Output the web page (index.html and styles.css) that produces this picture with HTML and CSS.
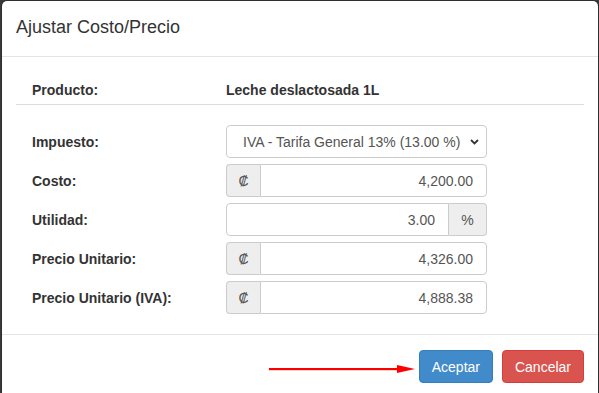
FILE: index.html
```html
<!DOCTYPE html>
<html lang="es">
<head>
  <meta charset="UTF-8">
  <title>Ajustar Costo/Precio</title>
  <link rel="stylesheet" href="styles.css">
</head>
<body>
  <div class="modal">
    <div class="modal-header">
      <h4 class="modal-title">Ajustar Costo/Precio</h4>
    </div>

    <div class="modal-body">
      <div class="row row-product">
        <div class="label">Producto:</div>
        <div class="label">Leche deslactosada 1L</div>
      </div>

      <div class="form">
        <div class="row">
          <div class="label">Impuesto:</div>
          <div class="select">
            <span class="select-text">IVA - Tarifa General 13% (13.00 %)</span>
            <svg class="chevron" width="9" height="6" viewBox="0 0 9 6">
              <path d="M1 1 L4.5 4.5 L8 1" fill="none" stroke="#333" stroke-width="1.8"/>
            </svg>
          </div>
        </div>

        <div class="row">
          <div class="label">Costo:</div>
          <div class="input-group">
            <span class="addon addon-left">₡</span>
            <span class="input">4,200.00</span>
          </div>
        </div>

        <div class="row">
          <div class="label">Utilidad:</div>
          <div class="input-group">
            <span class="input input-first">3.00</span>
            <span class="addon addon-right">%</span>
          </div>
        </div>

        <div class="row">
          <div class="label">Precio Unitario:</div>
          <div class="input-group">
            <span class="addon addon-left">₡</span>
            <span class="input">4,326.00</span>
          </div>
        </div>

        <div class="row">
          <div class="label">Precio Unitario (IVA):</div>
          <div class="input-group">
            <span class="addon addon-left">₡</span>
            <span class="input">4,888.38</span>
          </div>
        </div>
      </div>
    </div>

    <div class="modal-footer">
      <svg class="arrow" width="146" height="10" viewBox="0 0 146 10">
        <rect x="0" y="4" width="132" height="2.2" fill="#f00"/>
        <polygon points="128,1 146,5 128,9" fill="#f00"/>
      </svg>
      <button class="btn btn-primary">Aceptar</button>
      <button class="btn btn-danger">Cancelar</button>
    </div>
  </div>
</body>
</html>
```

FILE: styles.css
```css
body {
  margin: 0;
  background-color: #3a3a3a;
  font-family: "Liberation Sans", Arial, sans-serif;
  font-size: 14px;
  line-height: 20px;
  color: #333;
  overflow: hidden;
}
.modal {
  margin-left: 1px;
  width: 598px;
  height: 393px;
  box-sizing: border-box;
  overflow: hidden;
  background-color: #fff;
  border: 1px solid rgba(0, 0, 0, 0.2);
  border-bottom: none;
  border-radius: 6px 6px 0 0;
  background-clip: padding-box;
}
.modal-header {
  padding: 13px 14px 16px;
  border-bottom: 1px solid #e5e5e5;
}
.modal-title {
  margin: 0;
  font-size: 18px;
  font-weight: normal;
  line-height: 26px;
}
.modal-body {
  padding: 15px 14px 20px;
}
.row {
  display: grid;
  grid-template-columns: 194px 261px;
  align-items: center;
  padding-left: 16px;
}
.row-product {
  padding-top: 8px;
  padding-bottom: 4px;
  border-bottom: 1px solid #ddd;
}
.label {
  font-weight: bold;
}
.form {
  display: flex;
  flex-direction: column;
  gap: 6px;
  margin-top: 20px;
}
.select {
  position: relative;
  height: 33px;
  box-sizing: border-box;
  border: 1px solid #ccc;
  border-radius: 4px;
  padding: 6px 24px 6px 16px;
  color: #555;
  white-space: nowrap;
  overflow: hidden;
}
.select-text {
  display: block;
  overflow: hidden;
}
.chevron {
  position: absolute;
  right: 7px;
  top: 13px;
}
.input-group {
  display: flex;
  height: 33px;
}
.addon {
  display: flex;
  align-items: center;
  justify-content: center;
  background-color: #eee;
  border: 1px solid #ccc;
  color: #555;
}
.addon-left {
  width: 33px;
  border-radius: 4px 0 0 4px;
  border-right: none;
  font-size: 14px;
}
.addon-right {
  width: 37px;
  border-radius: 0 4px 4px 0;
  border-left: none;
}
.input {
  flex: 1;
  border: 1px solid #ccc;
  border-radius: 0 4px 4px 0;
  padding: 6px 13px;
  text-align: right;
  color: #555;
}
.input-first {
  border-radius: 4px 0 0 4px;
}
.modal-footer {
  display: flex;
  justify-content: flex-end;
  align-items: center;
  gap: 9px;
  padding: 15px 14px;
  border-top: 1px solid #e5e5e5;
}
.arrow {
  margin-right: -5px;
  margin-top: 4px;
}
.btn {
  height: 33px;
  padding: 0 12px;
  font-family: inherit;
  font-size: 14px;
  color: #fff;
  border: 1px solid transparent;
  border-radius: 4px;
}
.btn-primary {
  background-color: #428bca;
  border-color: #357ebd;
}
.btn-danger {
  background-color: #d9534f;
  border-color: #d43f3a;
}
```
